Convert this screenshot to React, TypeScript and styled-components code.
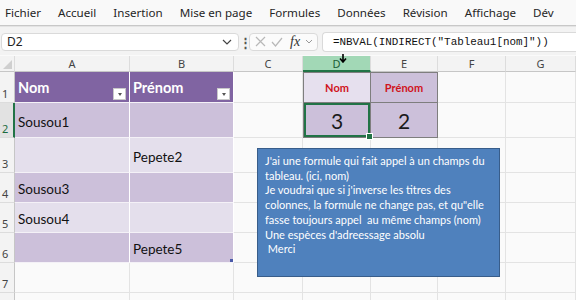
import React from 'react';
import styled, { createGlobalStyle } from 'styled-components';

const GlobalStyle = createGlobalStyle`
  html, body { margin: 0; padding: 0; background: #fafafa; }
  body { width: 576px; height: 300px; overflow: hidden; font-family: "Noto Sans", "Open Sans", sans-serif; }
`;

const Page = styled.div`
  width: 576px;
  height: 300px;
  position: relative;
  overflow: hidden;
  background: #fafafa;
`;

const MenuBar = styled.div`
  height: 25px;
  display: flex;
  align-items: center;
  gap: 17px;
  padding-left: 5px;
  background: #f9f9f9;
  border-bottom: 1px solid #c8c8c8;
  font-size: 11.6px;
  color: #262626;
  white-space: nowrap;
  overflow: hidden;
`;

const FormulaBar = styled.div`
  height: 29px;
  display: flex;
  align-items: center;
  padding-top: 1px;
  background: #f3f3f3;
  border-top: 1px solid #e4e4e4;
  box-sizing: border-box;
`;

const NameBox = styled.div`
  width: 238px;
  height: 18px;
  margin-left: 1px;
  display: flex;
  align-items: center;
  justify-content: space-between;
  padding: 0 6px 0 5px;
  box-sizing: border-box;
  background: #fff;
  border: 1px solid #dadada;
  border-radius: 4px;
  font-size: 12px;
  color: #222;
`;

const Dots = styled.div`
  width: 10px;
  text-align: center;
  font-size: 13px;
  font-weight: bold;
  color: #555;
`;

const FxBox = styled.div`
  width: 69px;
  height: 18px;
  display: flex;
  align-items: center;
  gap: 5px;
  padding-left: 5px;
  box-sizing: border-box;
  background: #fbfbfb;
  border: 1px solid #dadada;
  border-radius: 4px;
  color: #b5b5b5;
`;

const Fx = styled.span`
  font-family: "Liberation Serif", serif;
  font-style: italic;
  font-size: 14px;
  color: #333;
  margin-left: 2px;
`;

const FormulaInput = styled.div`
  flex: 1;
  height: 18px;
  margin-left: 4px;
  display: flex;
  align-items: center;
  padding-left: 10px;
  background: #fff;
  border: 1px solid #dadada;
  border-right: none;
  border-radius: 4px 0 0 4px;
  font-family: "Liberation Mono", monospace;
  font-size: 10.9px;
  color: #111;
  white-space: nowrap;
`;

const Sheet = styled.div`
  display: grid;
  grid-template-columns: 15px 115px 104px 69px 68px 67px 68px 70px;
  grid-template-rows: 16px 31px 35px 35px 30px 30px 30px 30px 30px;
  margin-top: 1px;
  position: relative;
`;

const Corner = styled.div`
  background: #f3f3f3;
  border-right: 1px solid #dcdcdc;
  border-bottom: 1px solid #c6c6c6;
  position: relative;
  &::after {
    content: '';
    position: absolute;
    right: 2px;
    bottom: 2px;
    border-left: 9px solid transparent;
    border-bottom: 9px solid #cfcfcf;
  }
`;

const ColHead = styled.div<{ $active?: boolean }>`
  display: flex;
  align-items: center;
  justify-content: center;
  font-size: 11px;
  box-sizing: border-box;
  background: ${p => (p.$active ? '#a2d8b6' : '#f3f3f3')};
  color: ${p => (p.$active ? '#1b5e37' : '#444')};
  border-right: 1px solid #dcdcdc;
  border-bottom: ${p => (p.$active ? '2px solid #217346' : '1px solid #c6c6c6')};
`;

const RowHead = styled.div<{ $active?: boolean }>`
  display: flex;
  align-items: flex-end;
  padding: 0 0 1px 2px;
  font-size: 11px;
  box-sizing: border-box;
  color: ${p => (p.$active ? '#1b6b3e' : '#444')};
  background: ${p => (p.$active ? '#e2e2e2' : '#f3f3f3')};
  border-right: ${p => (p.$active ? '2px solid #217346' : '1px solid #c6c6c6')};
  border-bottom: 1px solid #dcdcdc;
`;

type Kind = 'plain' | 'head' | 'dark' | 'light' | 'boxHeadLight' | 'boxHeadDark' | 'boxValue';

const bgFor: Record<Kind, string> = {
  plain: '#fafafa',
  head: '#8064a2',
  dark: '#ccc0da',
  light: '#e4dfec',
  boxHeadLight: '#e6e0ee',
  boxHeadDark: '#ccc0da',
  boxValue: '#ccc0da',
};

const Cell = styled.div<{ $kind: Kind; $selected?: boolean }>`
  position: relative;
  box-sizing: border-box;
  display: flex;
  align-items: center;
  padding: 3px 3px 0 3px;
  font-family: Lato, "Open Sans", sans-serif;
  font-size: 13.5px;
  color: #111;
  background: ${p => bgFor[p.$kind]};
  border-right: 1px solid ${p => (p.$kind === 'plain' ? '#e3e3e3' : '#fff')};
  border-bottom: 1px solid ${p => (p.$kind === 'plain' ? '#e3e3e3' : '#f4f1f7')};
  ${p => p.$kind === 'head' && `
    color: #fff;
    font-weight: bold;
    font-size: 14.5px;
    align-items: flex-start;
    padding-top: 7px;
  `}
  ${p => (p.$kind === 'boxHeadLight' || p.$kind === 'boxHeadDark') && `
    justify-content: center;
    color: #d0141c;
    font-weight: bold;
    font-size: 11px;
    padding-top: 0;
    border: 1px solid #7e7e7e;
    border-left-width: 0;
    border-top-width: 0;
  `}
  ${p => p.$kind === 'boxValue' && `
    justify-content: center;
    font-size: 21px;
    color: #1a1a1a;
    padding-top: 0;
    border-right: 1px solid #7e7e7e;
    border-bottom: 1px solid #7e7e7e;
  `}
  ${p => p.$selected && `
    box-shadow: inset 0 0 0 2px #217346;
    &::after {
      content: '';
      position: absolute;
      right: -3px;
      bottom: -3px;
      width: 5px;
      height: 5px;
      background: #217346;
      border: 1px solid #fff;
      z-index: 2;
    }
  `}
`;

const BoxLeftEdge = styled(Cell)`
  border-left: 1px solid #7e7e7e;
`;

const FilterButton = styled.span`
  position: absolute;
  right: 3px;
  bottom: 2px;
  width: 11px;
  height: 10px;
  background: #fff;
  border: 1px solid #c9c9c9;
  display: flex;
  align-items: center;
  justify-content: center;
  &::after {
    content: '';
    border-left: 2.5px solid transparent;
    border-right: 2.5px solid transparent;
    border-top: 3px solid #555;
  }
`;

const ResizeMark = styled.span`
  position: absolute;
  right: 0;
  bottom: 0;
  width: 3px;
  height: 3px;
  background: #4a5aa8;
`;

const Note = styled.div`
  position: absolute;
  left: 257px;
  top: 92px;
  width: 243px;
  height: 129px;
  box-sizing: border-box;
  padding: 5px 6px 0 7px;
  background: #4f81bd;
  border: 1px solid #385d8a;
  color: #fff;
  font-family: Lato, "Open Sans", sans-serif;
  font-size: 11px;
  line-height: 14.7px;
  white-space: pre;
`;

const Cursor = styled.svg`
  position: absolute;
  left: 339px;
  top: -2px;
  z-index: 3;
`;

const menu = ['Fichier', 'Accueil', 'Insertion', 'Mise en page', 'Formules', 'Données', 'Révision', 'Affichage', 'Dév'];
const cols = ['A', 'B', 'C', 'D', 'E', 'F', 'G'];

const tableRows: { a: string; b: string; kind: Kind }[] = [
  { a: 'Sousou1', b: '', kind: 'dark' },
  { a: '', b: 'Pepete2', kind: 'light' },
  { a: 'Sousou3', b: '', kind: 'dark' },
  { a: 'Sousou4', b: '', kind: 'light' },
  { a: '', b: 'Pepete5', kind: 'dark' },
];

const noteText = `J'ai une formule qui fait appel à un champs du
tableau. (ici, nom)
Je voudrai que si j'inverse les titres des
colonnes, la formule ne change pas, et qu"elle
fasse toujours appel  au même champs (nom)
Une espèces d'adreessage absolu
 Merci`;

function App() {
  const plainRest = (from: number, row: number) =>
    cols.slice(from).map(c => <Cell key={c + row} $kind="plain" />);

  return (
    <Page>
      <GlobalStyle />
      <MenuBar>
        {menu.map(m => (
          <span key={m}>{m}</span>
        ))}
      </MenuBar>

      <FormulaBar>
        <NameBox>
          <span>D2</span>
          <svg width="10" height="6" viewBox="0 0 10 6">
            <path d="M1 1l4 4 4-4" fill="none" stroke="#444" strokeWidth="1.2" />
          </svg>
        </NameBox>
        <Dots>⋮</Dots>
        <FxBox>
          <svg width="11" height="11" viewBox="0 0 11 11">
            <path d="M1 1l9 9M10 1l-9 9" stroke="#b8b8b8" strokeWidth="1.2" />
          </svg>
          <svg width="12" height="10" viewBox="0 0 12 10">
            <path d="M1 5l3.5 4L11 1" fill="none" stroke="#b8b8b8" strokeWidth="1.2" />
          </svg>
          <Fx>fx</Fx>
          <svg width="8" height="5" viewBox="0 0 8 5">
            <path d="M1 1l3 3 3-3" fill="none" stroke="#999" strokeWidth="1" />
          </svg>
        </FxBox>
        <FormulaInput>=NBVAL(INDIRECT("Tableau1[nom]"))</FormulaInput>
      </FormulaBar>

      <Sheet>
        <Cursor width="8" height="9" viewBox="0 0 8 9">
          <path d="M4 0v7M1 4.5L4 8l3-3.5" fill="none" stroke="#000" strokeWidth="1.6" />
        </Cursor>

        <Corner />
        {cols.map(c => (
          <ColHead key={c} $active={c === 'D'}>{c}</ColHead>
        ))}

        <RowHead>1</RowHead>
        <Cell $kind="head">Nom<FilterButton /></Cell>
        <Cell $kind="head">Prénom<FilterButton /></Cell>
        <Cell $kind="plain" />
        <BoxLeftEdge $kind="boxHeadLight" style={{ borderTop: '1px solid #7e7e7e' }}>Nom</BoxLeftEdge>
        <Cell $kind="boxHeadDark" style={{ borderTop: '1px solid #7e7e7e' }}>Prénom</Cell>
        {plainRest(5, 1)}

        {tableRows.map((r, i) => {
          const row = i + 2;
          return (
            <React.Fragment key={row}>
              <RowHead $active={row === 2}>{row}</RowHead>
              <Cell $kind={r.kind}>{r.a}</Cell>
              <Cell $kind={r.kind}>
                {r.b}
                {row === 6 && <ResizeMark />}
              </Cell>
              <Cell $kind="plain" />
              {row === 2 ? (
                <>
                  <BoxLeftEdge $kind="boxValue" $selected>3</BoxLeftEdge>
                  <Cell $kind="boxValue">2</Cell>
                  {plainRest(5, row)}
                </>
              ) : (
                plainRest(3, row)
              )}
            </React.Fragment>
          );
        })}

        <RowHead>7</RowHead>
        {plainRest(0, 7)}
        <RowHead />
        {plainRest(0, 8)}

        <Note>{noteText}</Note>
      </Sheet>
    </Page>
  );
}

export default App;
